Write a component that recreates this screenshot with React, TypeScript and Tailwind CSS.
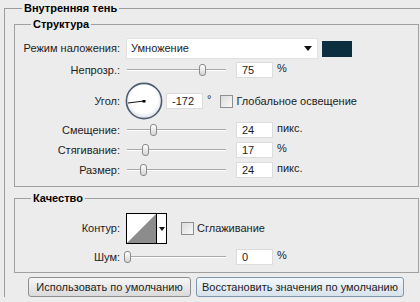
import { ReactNode } from "react";

const font = "font-['Liberation_Sans',Arial,sans-serif]";

function Slider({ pos }: { pos: number }) {
  return (
    <div className="relative ml-[4px] h-[16px] w-[102px] shrink-0">
      <div className="absolute left-[3px] right-0 top-[7px] h-[2px] border-t border-[#a9a9a9] bg-white" />
      <div
        className="absolute top-[2px] h-[12px] w-[7px] rounded-[3px] border border-[#8a8a8a] bg-gradient-to-b from-white to-[#d4d4d4]"
        style={{ left: pos }}
      />
    </div>
  );
}

function NumBox({ value, unit, ml = "ml-[10px]" }: { value: string; unit: string; ml?: string }) {
  return (
    <>
      <div className={`${ml} flex h-[16px] w-[37px] shrink-0 items-center border border-[#dcdcdc] bg-white pl-[5px] leading-none`}>
        {value}
      </div>
      <span className="ml-[4px] -mt-[3px]">{unit}</span>
    </>
  );
}

function Label({ children }: { children: ReactNode }) {
  return <div className="w-[105px] shrink-0 text-right">{children}</div>;
}

function SliderRow({ label, pos, value, unit, mt }: { label: string; pos: number; value: string; unit: string; mt: string }) {
  return (
    <div className={`${mt} flex h-[16px] items-center`}>
      <Label>{label}</Label>
      <Slider pos={pos} />
      <NumBox value={value} unit={unit} />
    </div>
  );
}

function CheckBox() {
  return <div className="h-[13px] w-[13px] shrink-0 border border-[#8f8f8f] bg-gradient-to-br from-[#dcdcdc] to-[#f8f8f8]" />;
}

export default function App() {
  return (
    <div className={`${font} h-[302px] w-[420px] overflow-hidden bg-[#ececec] pl-[4px] pt-[1px] text-[11px] text-[#1c1c1c]`}>
      <fieldset className="border-l border-t border-[#9c9c9c]">
        <legend className="ml-[17px] px-[2px] text-[11px] font-bold leading-[14px] text-black">Внутренняя тень</legend>

        {/* Структура */}
        <fieldset className="ml-[9px] mt-[2px] h-[170px] w-[405px] border border-[#a0a0a0]">
          <legend className="ml-[16px] px-[2px] font-bold leading-[14px] text-black">Структура</legend>

          <div className="mt-[7px] flex h-[21px] items-center">
            <Label>Режим наложения:</Label>
            <div className="ml-[6px] flex h-[21px] w-[192px] items-center justify-between border border-[#e2e2e2] bg-white pl-[4px] pr-[5px]">
              <span>Умножение</span>
              <svg width="8" height="5" viewBox="0 0 8 5">
                <polygon points="0,0 8,0 4,5" fill="#111" />
              </svg>
            </div>
            <div className="ml-[4px] h-[16px] w-[30px] bg-[#0c2f3f]" />
          </div>

          <SliderRow label="Непрозр.:" pos={75} value="75" unit="%" mt="mt-[3px]" />

          <div className="mt-[4px] flex h-[38px] items-center">
            <Label>Угол:</Label>
            <svg className="ml-[5px] shrink-0" width="38" height="38" viewBox="0 0 38 38">
              <defs>
                <radialGradient id="dial" cx="50%" cy="45%" r="55%">
                  <stop offset="70%" stopColor="#ffffff" />
                  <stop offset="100%" stopColor="#d9dde3" />
                </radialGradient>
              </defs>
              <circle cx="19" cy="19" r="17.6" fill="url(#dial)" stroke="#4f5d70" strokeWidth="1.6" />
              <line x1="19" y1="19" x2="3" y2="21" stroke="#111" strokeWidth="1" />
              <rect x="17.5" y="18" width="3" height="2.5" fill="#000" />
            </svg>
            <NumBox value="-172" unit="°" ml="ml-[3px]" />
            <div className="ml-[9px] flex items-center">
              <CheckBox />
              <span className="ml-[3px]">Глобальное освещение</span>
            </div>
          </div>

          <SliderRow label="Смещение:" pos={26} value="24" unit="пикс." mt="mt-[2px]" />
          <SliderRow label="Стягивание:" pos={18} value="17" unit="%" mt="mt-[4px]" />
          <SliderRow label="Размер:" pos={16} value="24" unit="пикс." mt="mt-[4px]" />
        </fieldset>

        {/* Качество */}
        <fieldset className="ml-[9px] mt-[4px] h-[82px] w-[405px] border border-[#a0a0a0]">
          <legend className="ml-[16px] px-[2px] font-bold leading-[14px] text-black">Качество</legend>

          <div className="mt-[8px] flex h-[31px] items-center">
            <Label>Контур:</Label>
            <div className="ml-[6px] flex h-[31px] w-[41px] shrink-0 border border-black bg-white">
              <svg width="29" height="29" viewBox="0 0 29 29" className="shrink-0">
                <polygon points="0,29 29,0 29,29" fill="#8c8c8c" />
              </svg>
              <div className="flex flex-1 items-center justify-center border-l border-black">
                <svg width="6" height="4" viewBox="0 0 6 4">
                  <polygon points="0,0 6,0 3,4" fill="#111" />
                </svg>
              </div>
            </div>
            <div className="ml-[14px] flex items-center">
              <CheckBox />
              <span className="ml-[3px]">Сглаживание</span>
            </div>
          </div>

          <SliderRow label="Шум:" pos={0} value="0" unit="%" mt="mt-[5px]" />
        </fieldset>

        <div className="mt-[4px] flex h-[20px]">
          <button className="ml-[23px] h-[20px] w-[163px] rounded-[3px] border border-[#8e8e8e] bg-gradient-to-b from-[#f7f7f7] to-[#dadada] text-[11px] leading-none text-[#1c1c1c]">
            Использовать по умолчанию
          </button>
          <button className="ml-[5px] h-[20px] w-[208px] rounded-[3px] border border-[#7f97ad] bg-gradient-to-b from-[#f3f8fc] to-[#d6e2ec] text-[11px] leading-none text-[#1c1c1c]">
            Восстановить значения по умолчанию
          </button>
        </div>
      </fieldset>
    </div>
  );
}
